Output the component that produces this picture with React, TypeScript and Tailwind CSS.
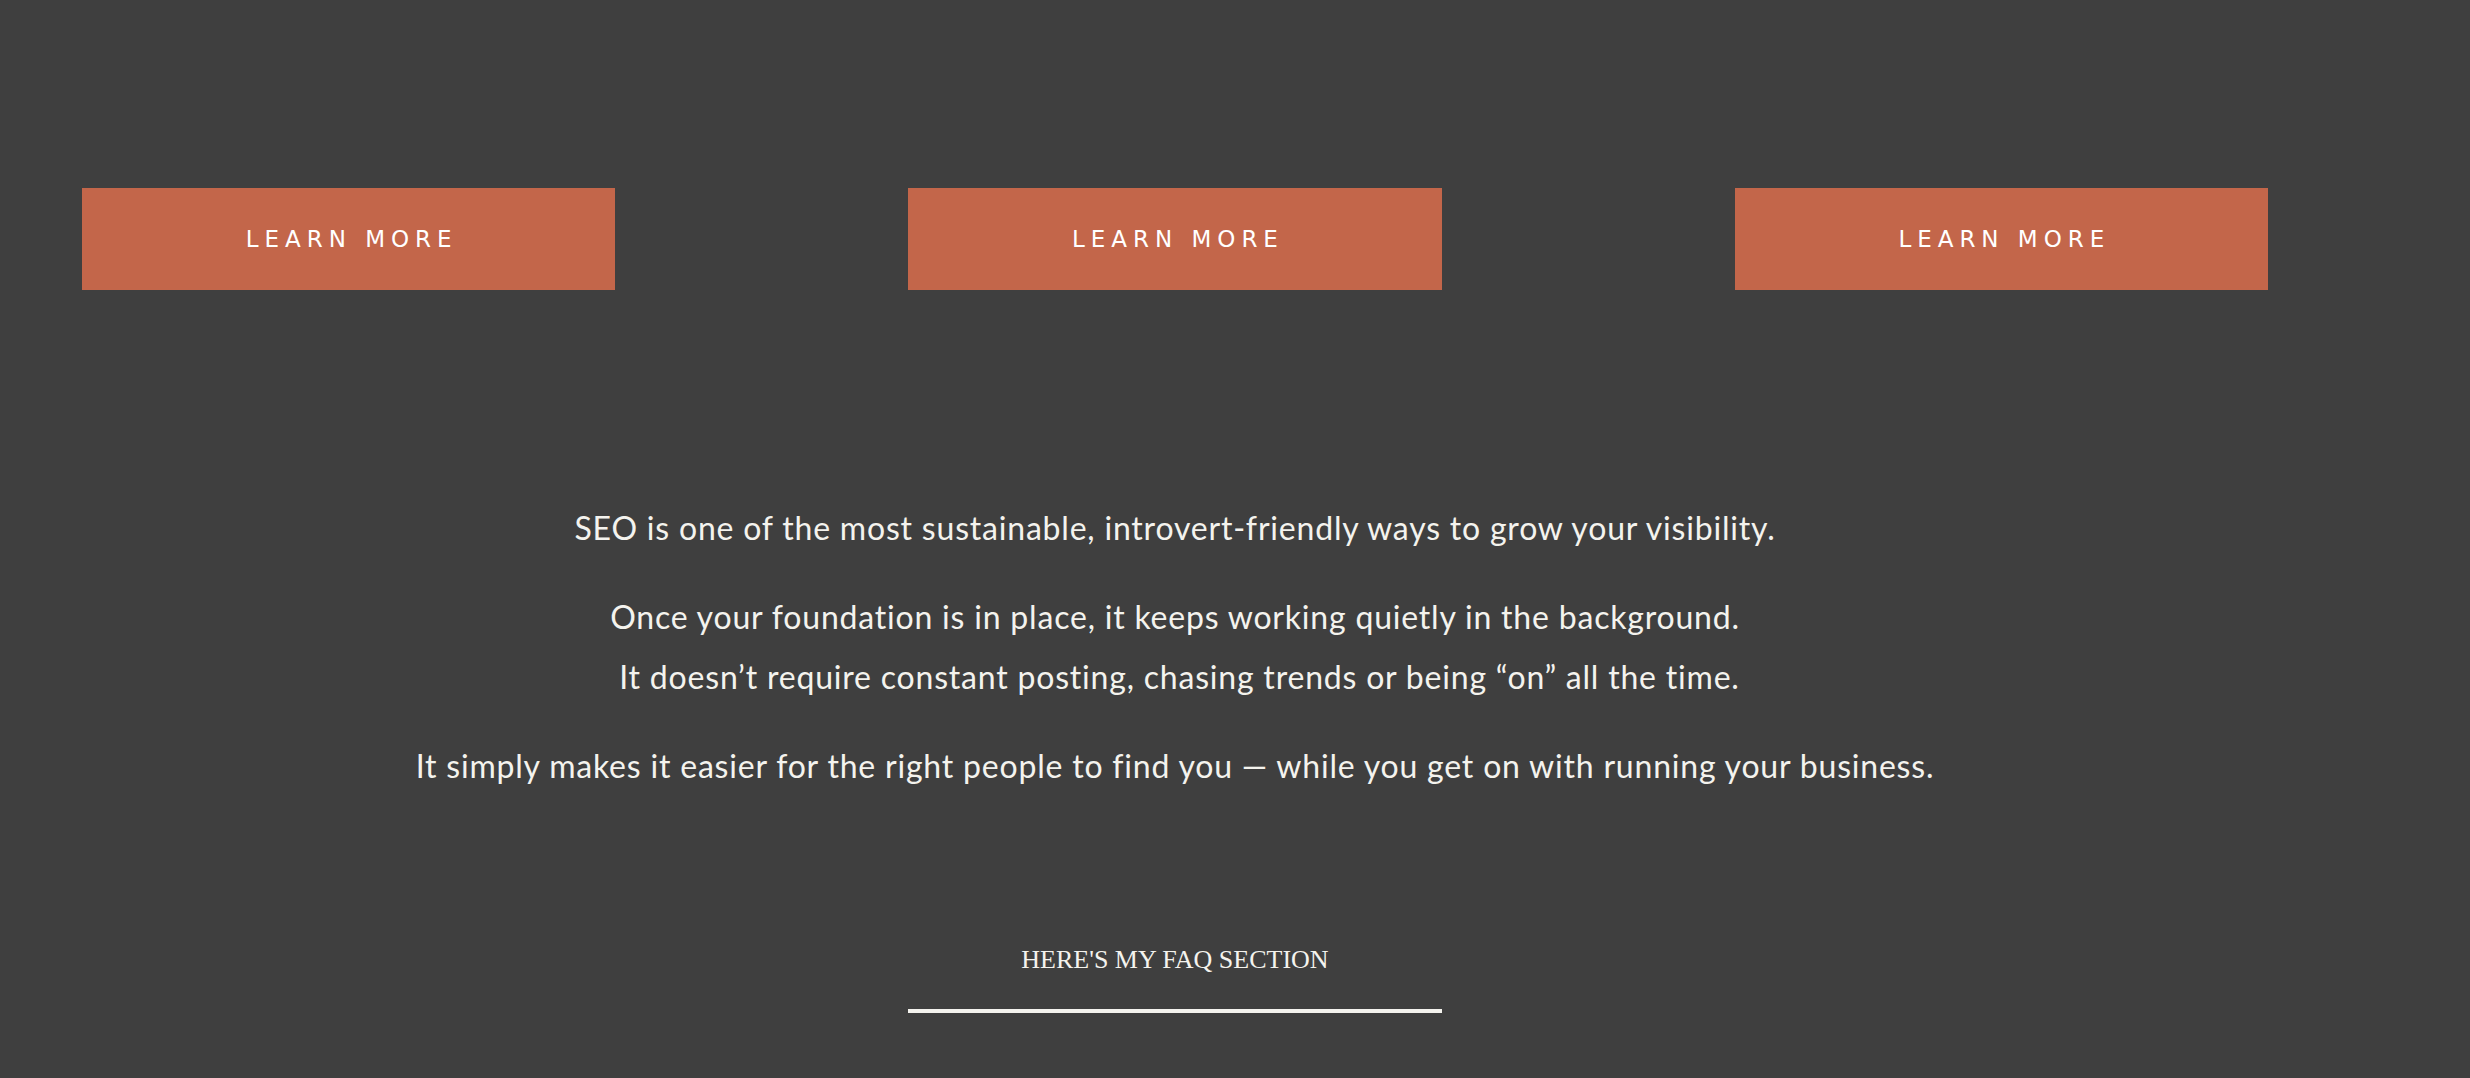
import React from "react";

const buttons = ["LEARN MORE", "LEARN MORE", "LEARN MORE"];

export default function App() {
  return (
    <div className="min-h-[1078px] w-full bg-[#3f3f3f] text-[#f4f3ee]">
      <div className="ml-[82px] w-[2186px] pt-[188px]">
        <div className="flex gap-[293px]">
          {buttons.map((label, i) => (
            <a
              key={i}
              href="#"
              className="flex h-[102px] w-[534px] items-center justify-center bg-[#c3664a] pl-[0.26em] font-['DejaVu_Sans','Liberation_Sans',sans-serif] text-[23px] tracking-[0.26em] text-white"
            >
              {label}
            </a>
          ))}
        </div>

        <div className="mt-[208px] flex flex-col items-center text-center font-['Lato','Open_Sans',sans-serif] text-[32px] leading-[60px] tracking-[0.025em]">
          <p>SEO is one of the most sustainable, introvert-friendly ways to grow your visibility.</p>
          <p className="mt-[29px]">
            Once your foundation is in place, it keeps working quietly in the background.
            <br />
            &nbsp;It doesn’t require constant posting, chasing trends or being “on” all the time.
          </p>
          <p className="mt-[29px]">
            It simply makes it easier for the right people to find you — while you get on with running your business.
          </p>
        </div>

        <div className="mt-[149px] flex flex-col items-center">
          <h2 className="font-['Liberation_Serif','Times_New_Roman',serif] text-[26px] leading-[30px] uppercase">
            Here's my FAQ section
          </h2>
          <div className="mt-[34px] h-[4px] w-[534px] bg-[#f4f3ee]" />
        </div>
      </div>
    </div>
  );
}
